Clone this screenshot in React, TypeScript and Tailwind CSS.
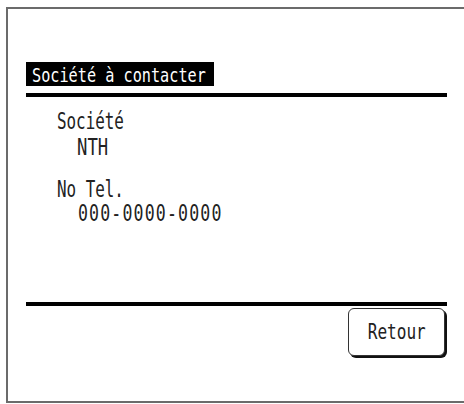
import React from 'react';

// Narrow LCD-style text: a mono face squeezed horizontally
const Lcd: React.FC<{ className?: string; children: React.ReactNode }> = ({ className = '', children }) => (
  <span className={`inline-block whitespace-nowrap ${className}`}>{children}</span>
);

const App: React.FC = () => {
  return (
    <div
      className="w-[464px] h-[404px] bg-white overflow-hidden"
      style={{ fontFamily: '"DejaVu Sans Mono", "Liberation Mono", monospace' }}
    >
      <div className="ml-[6px] mt-[7px] h-[396px] border-l-2 border-t-2 border-b-2 border-[#6b6b6b] pl-[18px] pr-[17px] flex flex-col">
        {/* screen title */}
        <div className="mt-[53px] h-[24px] w-[188px] bg-black pl-[6px] text-white text-[19px] leading-[26px]">
          <Lcd className="origin-left scale-x-[0.8]">Société à contacter</Lcd>
        </div>
        <div className="mt-[7px] h-[4px] bg-black" />

        {/* contact details */}
        <div className="pl-[31px] text-[#222] text-[23px] leading-[22px]">
          <div className="mt-[13px]">
            <Lcd className="origin-left scale-x-[0.69]">Société</Lcd>
          </div>
          <div className="mt-[4px] pl-[20px]">
            <Lcd className="origin-left scale-x-[0.75]">NTH</Lcd>
          </div>
          <div className="mt-[20px]">
            <Lcd className="origin-left scale-x-[0.69]">No Tel.</Lcd>
          </div>
          <div className="mt-[2px] pl-[21px]">
            <Lcd className="origin-left scale-x-[0.72] tracking-[1.6px]">000-0000-0000</Lcd>
          </div>
        </div>

        <div className="mt-auto h-[4px] bg-black" />

        {/* back button */}
        <div className="mt-[2px] mb-[45px] flex justify-end pr-[2px]">
          <button className="w-[97px] h-[48px] rounded-[6px] border-[1.5px] border-[#333] bg-white shadow-[2px_2px_0_#111] flex items-center justify-center text-[#222] text-[22px] leading-[22px]">
            <Lcd className="origin-center scale-x-[0.73]">Retour</Lcd>
          </button>
        </div>
      </div>
    </div>
  );
};

export default App;
